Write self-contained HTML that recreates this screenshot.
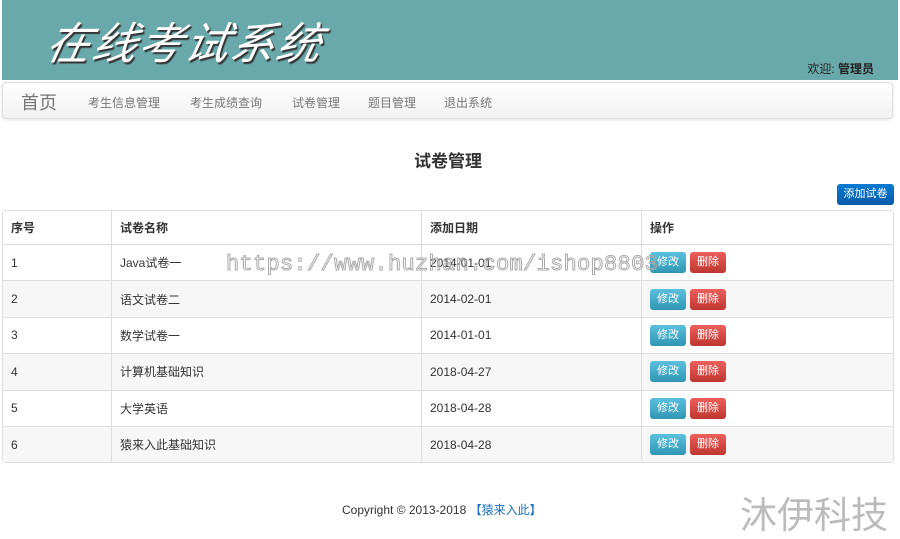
<!DOCTYPE html>
<html><head><meta charset="utf-8"><style>
*{margin:0;padding:0;box-sizing:border-box}
body{width:900px;height:531px;overflow:hidden;background:#fff;font-family:"Liberation Sans","Noto Sans CJK SC",sans-serif;font-size:12px;color:#333;position:relative}
.hd{position:absolute;left:2px;top:0;width:896px;height:80px;background:#6aa9ab}
.logo{position:absolute;left:46px;top:10px;font-size:44px;color:#fff;font-style:italic;transform:skewX(-12deg);text-shadow:2px 2px 1px #333;letter-spacing:2px;font-family:"Noto Sans CJK SC",sans-serif;line-height:60px}
.wel{position:absolute;right:24px;top:60px;font-size:12px;color:#222}
.wel b{font-weight:bold}
.nav{position:absolute;left:2px;top:82px;width:891px;height:37px;border:1px solid #ddd;border-radius:4px;background:linear-gradient(#fff,#f2f2f2);box-shadow:0 1px 3px rgba(0,0,0,.1)}
.nav span{position:absolute;top:11px;color:#777;font-size:12px}
.nav .home{font-size:18px;top:6px;left:18px}
h3{position:absolute;left:0;width:896px;top:147px;text-align:center;font-size:17px;font-weight:bold;color:#333}
.add{position:absolute;left:837px;top:184px;width:57px;height:21px;background:linear-gradient(#0a7ad0,#0a5ba8);color:#fff;border-radius:3px;font-size:11px;text-align:center;line-height:21px}
table{position:absolute;left:2px;top:210px;width:892px;border-collapse:separate;border-spacing:0;border:1px solid #ddd;border-radius:4px}
td,th{height:36.4px;border-left:1px solid #ddd;border-top:1px solid #ddd;padding-left:8px;text-align:left;font-size:12px;vertical-align:middle}
th{font-weight:bold;height:33px;border-top:0}
tr td:first-child,tr th:first-child{border-left:0}
tr:nth-child(odd) td{background:#f7f7f7}
.b{display:inline-block;width:36px;height:21px;line-height:21px;text-align:center;color:#fff;border-radius:3px;font-size:11px;margin-right:4px}
.e{background:linear-gradient(#5bc0de,#2f96b4)}
.d{background:linear-gradient(#ee5f5b,#bd362f)}
.ft{position:absolute;top:501px;left:342px;font-size:12px;color:#333}
.ft a{color:#1a6fc0}
.wm{position:absolute;left:740px;top:490px;font-size:37px;color:#bbb;font-family:"Noto Sans CJK SC",sans-serif;line-height:44px}
.url{position:absolute;left:226px;top:252px;font-family:"Liberation Mono",monospace;font-size:22px;color:transparent;-webkit-text-stroke:1px #aaa;letter-spacing:0.3px}
</style></head><body>
<div class="hd"><div class="logo">在线考试系统</div><div class="wel">欢迎: <b>管理员</b></div></div>
<div class="nav"><span class="home">首页</span><span style="left:85px">考生信息管理</span><span style="left:187px">考生成绩查询</span><span style="left:289px">试卷管理</span><span style="left:365px">题目管理</span><span style="left:441px">退出系统</span></div>
<h3>试卷管理</h3>
<div class="add">添加试卷</div>
<table>
<tr><th style="width:108px">序号</th><th style="width:310px">试卷名称</th><th style="width:220px">添加日期</th><th>操作</th></tr>
<tr><td>1</td><td>Java试卷一</td><td>2014-01-01</td><td><span class="b e">修改</span><span class="b d">删除</span></td></tr>
<tr><td>2</td><td>语文试卷二</td><td>2014-02-01</td><td><span class="b e">修改</span><span class="b d">删除</span></td></tr>
<tr><td>3</td><td>数学试卷一</td><td>2014-01-01</td><td><span class="b e">修改</span><span class="b d">删除</span></td></tr>
<tr><td>4</td><td>计算机基础知识</td><td>2018-04-27</td><td><span class="b e">修改</span><span class="b d">删除</span></td></tr>
<tr><td>5</td><td>大学英语</td><td>2018-04-28</td><td><span class="b e">修改</span><span class="b d">删除</span></td></tr>
<tr><td>6</td><td>猿来入此基础知识</td><td>2018-04-28</td><td><span class="b e">修改</span><span class="b d">删除</span></td></tr>
</table>
<div class="url">https://www.huzhan.com/ishop8803</div>
<div class="ft">Copyright © 2013-2018 <a>【猿来入此】</a></div>
<div class="wm">沐伊科技</div>
</body></html>
